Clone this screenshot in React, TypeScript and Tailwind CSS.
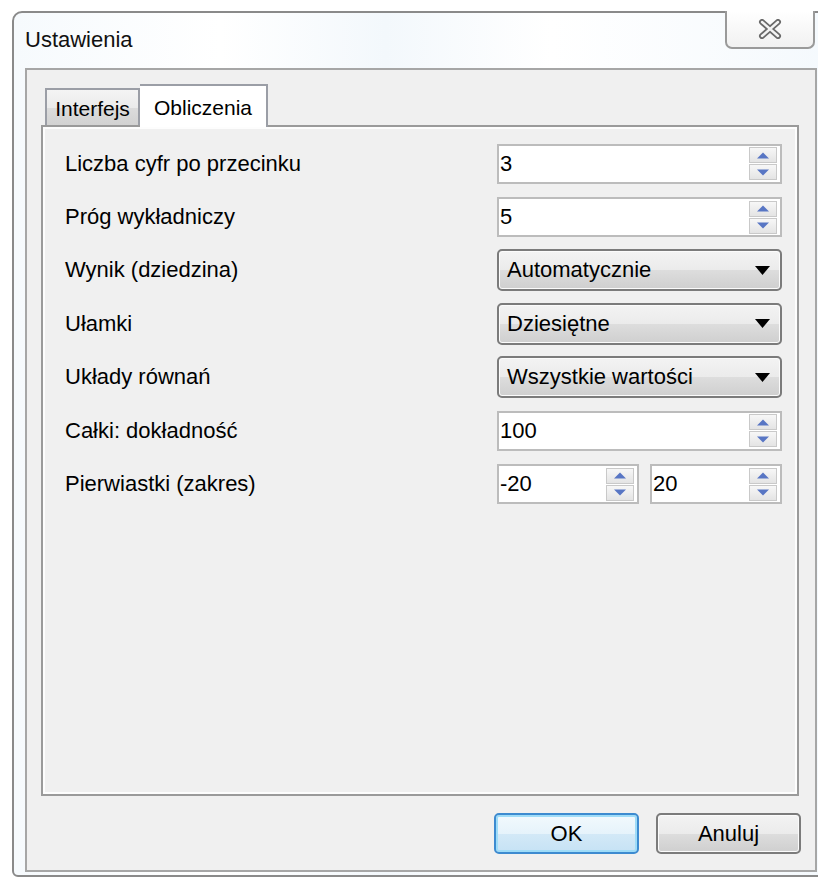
import React from 'react';

const font = "font-['Liberation_Sans','Arial',sans-serif]";

// small blue spinner arrow
const SpinArrow = ({ up }: { up?: boolean }) => (
  <svg width="12" height="7" viewBox="0 0 12 7">
    <path d={up ? 'M0 6.5 L6 0.5 L12 6.5 Z' : 'M0 0.5 L6 6.5 L12 0.5 Z'} fill="#5876c4" />
  </svg>
);

const SpinBox = ({ value, width }: { value: string; width: string }) => (
  <div className={`${width} flex h-[40px] items-center border-2 border-[#bcbcbc] bg-white pl-[1px] pr-[3px]`}>
    <span className="flex-1 text-[22px] leading-none text-black">{value}</span>
    <div className="flex h-[33px] w-[28px] flex-col gap-[1px]">
      <div className="flex flex-1 items-center justify-center border border-[#c9c9c9] bg-[linear-gradient(#f7f7f7,#e4e4e4)]">
        <SpinArrow up />
      </div>
      <div className="flex flex-1 items-center justify-center border border-[#c9c9c9] bg-[linear-gradient(#f7f7f7,#e4e4e4)]">
        <SpinArrow />
      </div>
    </div>
  </div>
);

const Combo = ({ value }: { value: string }) => (
  <div className="flex h-[42px] w-[285px] items-center rounded-[5px] border-2 border-[#7b7b7b] bg-[linear-gradient(#f3f3f3_0%,#ebebeb_50%,#dddddd_51%,#cfcfcf_100%)] pl-[8px] pr-[10px] shadow-[inset_0_0_0_1px_#fbfbfb]">
    <span className="flex-1 text-[22px] leading-none text-black">{value}</span>
    <svg width="15" height="9" viewBox="0 0 15 9">
      <path d="M0 0 L15 0 L7.5 9 Z" fill="#000" />
    </svg>
  </div>
);

const rows: { label: string; control: React.ReactNode }[] = [
  { label: 'Liczba cyfr po przecinku', control: <SpinBox value="3" width="w-[285px]" /> },
  { label: 'Próg wykładniczy', control: <SpinBox value="5" width="w-[285px]" /> },
  { label: 'Wynik (dziedzina)', control: <Combo value="Automatycznie" /> },
  { label: 'Ułamki', control: <Combo value="Dziesiętne" /> },
  { label: 'Układy równań', control: <Combo value="Wszystkie wartości" /> },
  { label: 'Całki: dokładność', control: <SpinBox value="100" width="w-[285px]" /> },
  {
    label: 'Pierwiastki (zakres)',
    control: (
      <div className="flex gap-[11px]">
        <SpinBox value="-20" width="w-[142px]" />
        <SpinBox value="20" width="w-[132px]" />
      </div>
    ),
  },
];

const Button = ({ children, primary }: { children: React.ReactNode; primary?: boolean }) => (
  <div
    className={`flex h-[41px] w-[145px] items-center justify-center rounded-[5px] border-2 text-[22px] text-black ${
      primary
        ? 'border-[#3d8bd0] bg-[linear-gradient(#f2f9fd_0%,#e6f3fb_50%,#d3e9f7_51%,#c6e2f5_100%)] shadow-[inset_0_0_0_2px_#9fdcf8]'
        : 'border-[#7b7b7b] bg-[linear-gradient(#f3f3f3_0%,#ebebeb_50%,#dddddd_51%,#cfcfcf_100%)] shadow-[inset_0_0_0_1px_#fbfbfb]'
    }`}
  >
    {children}
  </div>
);

export default function App() {
  return (
    <div className={`h-[880px] w-[818px] overflow-hidden bg-white pl-[12px] pt-[11px] ${font}`}>
      {/* window frame */}
      <div className="relative flex h-[866px] w-[830px] flex-col rounded-tl-[10px] rounded-bl-[6px] border-2 border-[#8a8a8a] bg-[linear-gradient(90deg,#f6fafd_0%,#ffffff_25%,#f3f8fc_45%,#ffffff_65%,#f4f9fd_100%)] px-[11px] pb-[3px]">
        <div className="flex h-[55px] items-center pb-[3px] text-[22px] text-[#111]">Ustawienia</div>

        {/* close caption button */}
        <div className="absolute left-[711px] top-[-2px] flex h-[38px] w-[90px] items-center justify-center rounded-b-[7px] border-2 border-t-0 border-[#9a9a9a] bg-[linear-gradient(#ffffff,#f1f1f1)]">
          <svg width="24" height="20" viewBox="0 0 24 20">
            <path d="M4 3 L20 17 M20 3 L4 17" stroke="#6a6a6a" strokeWidth="6" strokeLinecap="round" />
            <path d="M4 3 L20 17 M20 3 L4 17" stroke="#f4f4f4" strokeWidth="2.4" strokeLinecap="round" />
          </svg>
        </div>

        {/* client area */}
        <div className="flex h-[804px] w-[792px] flex-col border-2 border-[#a6a6a6] bg-[#f0f0f0] px-[14px] pt-[14px]">
          {/* tab strip */}
          <div className="relative z-10 flex h-[41px] items-end pl-[4px]">
            <div className="flex h-[37px] w-[95px] items-center justify-center border-2 border-b-0 border-[#9b9ea6] bg-[linear-gradient(#f4f4f4_0%,#ebebeb_50%,#dcdcdc_51%,#d2d2d2_100%)] pt-[2px] text-[21px] text-black">
              Interfejs
            </div>
            <div className="-mb-[2px] flex h-[43px] w-[128px] items-start justify-center border-2 border-b-0 border-l-0 border-[#9b9ea6] bg-white pt-[6px] text-[21px] text-black">
              Obliczenia
            </div>
          </div>

          {/* tab page */}
          <div className="flex h-[671px] w-[758px] flex-col border-2 border-[#9a9a9a] bg-[#f0f0f0] pl-[22px] pt-[10px] shadow-[inset_0_0_0_2px_#fdfdfd]">
            {rows.map((r) => (
              <div key={r.label} className="flex h-[53.4px] items-center">
                <span className="w-[432px] text-[22px] leading-none text-black">{r.label}</span>
                {r.control}
              </div>
            ))}
          </div>

          {/* dialog buttons */}
          <div className="mt-[17px] flex justify-end gap-[17px] pr-[0px]">
            <Button primary>OK</Button>
            <Button>Anuluj</Button>
          </div>
        </div>
      </div>
    </div>
  );
}
